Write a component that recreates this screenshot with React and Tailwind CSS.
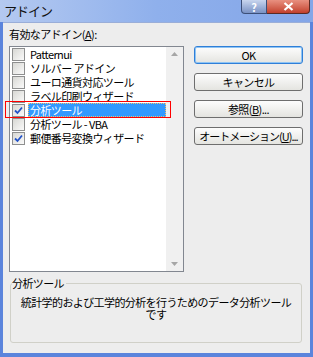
import { useState } from 'react';

const items = [
	{ label: 'Patternui', checked: false },
	{ label: 'ソルバー アドイン', checked: false },
	{ label: 'ユーロ通貨対応ツール', checked: false },
	{ label: 'ラベル印刷ウィザード', checked: false },
	{ label: '分析ツール', checked: true },
	{ label: '分析ツール - VBA', checked: false },
	{ label: '郵便番号変換ウィザード', checked: true },
];

const font = { fontFamily: '"Noto Sans CJK JP", "MS UI Gothic", sans-serif' };

const Checkbox = ({ checked }) => (
	<span className="flex h-[13px] w-[13px] shrink-0 items-center justify-center border border-[#8e8f8f] bg-gradient-to-br from-[#d8d8d4] to-[#fafafa]">
		{checked && (
			<svg width="9" height="9" viewBox="0 0 9 9">
				<path d="M1 4.5 L3.5 7 L8 1.5" stroke="#2353c8" strokeWidth="1.8" fill="none" />
			</svg>
		)}
	</span>
);

const Button = ({ children, primary }) => (
	<button
		className={
			primary
				? 'flex h-[18px] w-full items-center justify-center whitespace-nowrap rounded-[3px] border border-[#2f7fd8] bg-gradient-to-b from-[#fdfdfd] to-[#e4e4e0] leading-none text-black shadow-[inset_0_0_0_1px_#8fc4f4]'
				: 'flex h-[18px] w-full items-center justify-center whitespace-nowrap rounded-[3px] border border-[#6e6e6e] bg-gradient-to-b from-[#fdfdfd] to-[#e4e4e0] leading-none text-black'
		}
	>
		{children}
	</button>
);

export default function App() {
	const [selected] = useState(4);

	return (
		<div className="relative flex h-[357px] w-[313px] flex-col bg-[#5b84dc]" style={font}>
			{/* title bar */}
			<div className="flex h-[22px] shrink-0 items-start justify-between bg-gradient-to-r from-[#b4c9f0] via-[#8fb0ec] to-[#84a6e8] pl-[4px] pr-[3px]">
				<span className="mt-[3px] text-[13px] leading-[16px] tracking-[-1px] text-[#111]">アドイン</span>
				<div className="flex">
					<div className="flex h-[14px] w-[26px] items-center justify-center rounded-bl-[4px] border border-t-0 border-[#3c4f78] bg-gradient-to-b from-[#c8d5ee] to-[#7a92c4] text-[11px] font-bold leading-[12px] text-white">
						?
					</div>
					<div className="flex h-[14px] w-[43px] items-center justify-center rounded-br-[4px] border border-l-0 border-t-0 border-[#5a2a24] bg-gradient-to-b from-[#e89080] to-[#c23f2c]">
						<svg width="11" height="9" viewBox="0 0 11 9">
							<path d="M1.5 1 L9.5 8 M9.5 1 L1.5 8" stroke="#ffffff" strokeWidth="2.2" />
						</svg>
					</div>
				</div>
			</div>

			{/* body */}
			<div className="mx-[3px] mb-[4px] flex flex-1 flex-col border-t border-[#9aaed8] bg-[#ededed] text-[11px] tracking-[-0.6px] text-black">
				<div className="flex pl-[6px]">
					<div className="flex w-[175px] flex-col">
						<div className="mt-[3px] leading-[16px]">
							有効なアドイン(<span className="underline">A</span>):
						</div>
						<div className="mt-[4px] flex h-[226px] border border-[#828790] bg-white">
							<div className="flex flex-1 flex-col">
								{items.map((item, i) => (
									<div key={item.label} className="flex h-[14px] items-center pl-[2px]">
										<Checkbox checked={item.checked} />
										<span
											className={
												i === selected
													? 'ml-[3px] flex h-[14px] flex-1 items-center border border-dotted border-[#f0c070] bg-[#3399ff] pl-[1px] leading-none text-white'
													: 'ml-[3px] pl-[2px] leading-none'
											}
										>
											{item.label}
										</span>
									</div>
								))}
							</div>
							<div className="flex w-[17px] flex-col items-center justify-between bg-[#f0f0f0] py-[5px]">
								<svg width="7" height="4" viewBox="0 0 7 4">
									<path d="M0 4 L3.5 0 L7 4 Z" fill="#a6a6a6" />
								</svg>
								<svg width="7" height="4" viewBox="0 0 7 4">
									<path d="M0 0 L3.5 4 L7 0 Z" fill="#a6a6a6" />
								</svg>
							</div>
						</div>
					</div>
					<div className="ml-[10px] mt-[23px] flex w-[109px] flex-col gap-[9px]">
						<Button primary>OK</Button>
						<Button>キャンセル</Button>
						<Button>
							参照(<span className="underline">B</span>)...
						</Button>
						<Button>
							<span className="tracking-[-1px]">
								オートメーション(<span className="underline">U</span>)...
							</span>
						</Button>
					</div>
				</div>

				{/* group box */}
				<div className="relative ml-[7px] mr-[8px] mt-[11px] h-[60px] rounded-[3px] border border-[#d0d0c8]">
					<span className="absolute left-[1px] top-[-9px] bg-[#ededed] pr-[2px] leading-[16px]">分析ツール</span>
					<div className="mt-[12px] text-center leading-[12px]">
						統計学的および工学的分析を行うためのデータ分析ツール
						<br />
						です
					</div>
				</div>
			</div>

			{/* highlight frame */}
			<div className="absolute left-[5px] top-[101px] h-[17px] w-[166px] border border-[#ff0000]" />
		</div>
	);
}
